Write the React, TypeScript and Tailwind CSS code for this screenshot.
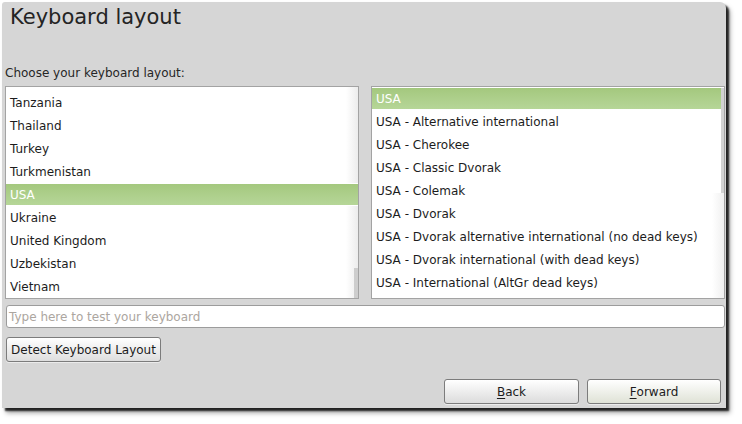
import React from "react";

const leftItems = ["Tanzania", "Thailand", "Turkey", "Turkmenistan", "USA", "Ukraine", "United Kingdom", "Uzbekistan", "Vietnam"];
const rightItems = [
  "USA",
  "USA - Alternative international",
  "USA - Cherokee",
  "USA - Classic Dvorak",
  "USA - Colemak",
  "USA - Dvorak",
  "USA - Dvorak alternative international (no dead keys)",
  "USA - Dvorak international (with dead keys)",
  "USA - International (AltGr dead keys)",
];

function Row({ label, selected }: { label: string; selected: boolean }) {
  return (
    <div
      className={
        "relative h-[23px] shrink-0 flex items-center pl-[4px] whitespace-nowrap " +
        (selected
          ? "bg-gradient-to-b from-[#a4c87e] to-[#b6d698] border-y border-white text-white"
          : "text-[#1c1c1c]")
      }
    >
      {label}
    </div>
  );
}

function Btn({ children, className }: { children: React.ReactNode; className?: string }) {
  return (
    <div
      className={
        "h-[25px] flex items-center justify-center rounded-[3px] border border-[#7c7c7c] text-[12px] text-[#1c1c1c] shadow-[0_1px_0_rgba(255,255,255,0.5)] " +
        (className ?? "")
      }
    >
      {children}
    </div>
  );
}

export default function App() {
  return (
    <div
      className="w-[742px] h-[424px] bg-white overflow-hidden pl-[2px] pt-[2px]"
      style={{ fontFamily: '"DejaVu Sans", Verdana, sans-serif' }}
    >
      <div className="relative w-[724px] h-[406px] bg-[#d6d6d6] rounded-tr-[6px] rounded-tl-[3px] shadow-[3px_3px_2px_rgba(0,0,0,0.8),4px_5px_5px_rgba(0,0,0,0.35)] flex flex-col">
        <div className="pl-[8px] pt-[3px] h-[63px] text-[21px] leading-[24px] text-[#242424]">Keyboard layout</div>
        <div className="pl-[3px] h-[21px] text-[12px] leading-[16px] text-[#262626]">Choose your keyboard layout:</div>
        <div className="flex gap-[12px] pl-[3px] pr-[1px] text-[12px]">
          <div className="relative w-[354px] h-[213px] bg-white border border-[#a3a3a3] overflow-hidden flex flex-col">
            <div className="absolute right-0 top-0 bottom-0 w-[12px] bg-gradient-to-r from-white/0 to-[#ececec]" />
            <div className="relative pt-[4px] flex flex-col">
              {leftItems.map((l) => (
                <Row key={l} label={l} selected={l === "USA"} />
              ))}
            </div>
            <div className="absolute right-0 bottom-0 w-[4px] h-[30px] bg-[#cdcdcd]" />
          </div>
          <div className="relative w-[354px] h-[213px] bg-white border border-[#a3a3a3] overflow-hidden flex flex-col">
            <div className="absolute right-0 top-[106px] bottom-0 w-[12px] bg-gradient-to-r from-white/0 to-[#f0f0f0]" />
            {rightItems.map((l) => (
              <Row key={l} label={l} selected={l === "USA"} />
            ))}
            <div className="absolute right-0 top-[1px] w-[3px] h-[105px] bg-[#d2d2d2]" />
          </div>
        </div>
        <div className="mt-[6px] ml-[4px] mr-[1px] h-[23px] bg-white rounded-[3px] border border-[#9c9c9c] flex items-center pl-[2px] text-[12px] text-[#aca6a0]">
          Type here to test your keyboard
        </div>
        <div className="mt-[9px] ml-[4px] flex">
          <Btn className="w-[155px] bg-gradient-to-b from-white to-[#dedede]">Detect Keyboard Layout</Btn>
        </div>
        <div className="mt-[17px] flex justify-end gap-[8px] pr-[5px]">
          <Btn className="w-[135px] bg-gradient-to-b from-white to-[#dcdcdc]">
            <span className="underline underline-offset-2">B</span>ack
          </Btn>
          <Btn className="w-[134px] bg-gradient-to-b from-white to-[#dfe2d6]">
            <span className="underline underline-offset-2">F</span>orward
          </Btn>
        </div>
      </div>
    </div>
  );
}
